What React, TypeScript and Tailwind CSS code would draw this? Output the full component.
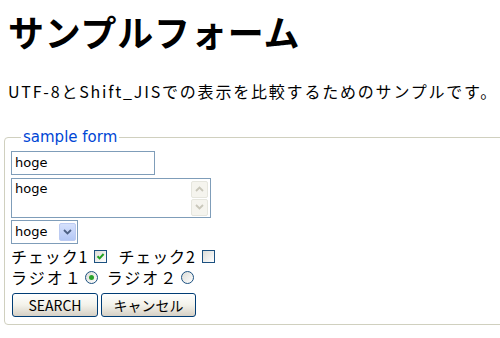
const jp = "font-['MS_PGothic','Noto_Sans_CJK_JP',sans-serif]";

function Chevron({ dir, color }: { dir: 'up' | 'down'; color: string }) {
  return (
    <svg width="9" height="6" viewBox="0 0 9 6">
      <path
        d={dir === 'up' ? 'M1 5 L4.5 1.5 L8 5' : 'M1 1 L4.5 4.5 L8 1'}
        fill="none"
        stroke={color}
        strokeWidth="1.8"
      />
    </svg>
  );
}

function TextBox({ value }: { value: string }) {
  return (
    <div className="flex h-[24px] w-[144px] items-center border border-[#7f9db9] bg-white px-[3px] font-['DejaVu_Sans',sans-serif] text-[13px] text-black">
      {value}
    </div>
  );
}

function TextArea({ value }: { value: string }) {
  return (
    <div className="flex h-[40px] w-[200px] border border-[#7f9db9] bg-white">
      <div className="flex-1 px-[3px] pt-[2px] font-['DejaVu_Sans',sans-serif] text-[13px] leading-[16px] text-black">
        {value}
      </div>
      <div className="mr-[2px] flex w-[17px] flex-col justify-center gap-[1px] py-[1px]">
        <div className="flex h-[17px] items-center justify-center rounded-[2px] border border-[#e6e6de] bg-[#f5f4ee]">
          <Chevron dir="up" color="#c9c7ba" />
        </div>
        <div className="flex h-[17px] items-center justify-center rounded-[2px] border border-[#e6e6de] bg-[#f5f4ee]">
          <Chevron dir="down" color="#c9c7ba" />
        </div>
      </div>
    </div>
  );
}

function SelectBox({ value }: { value: string }) {
  return (
    <div className="flex h-[24px] w-[67px] items-center border border-[#7f9db9] bg-white pl-[3px] pr-[1px]">
      <span className="flex-1 font-['DejaVu_Sans',sans-serif] text-[13px] text-black">{value}</span>
      <div className="flex h-[18px] w-[17px] items-center justify-center rounded-[2px] border border-[#bccbf2] bg-gradient-to-b from-[#d6e1fc] to-[#b4c8f6]">
        <Chevron dir="down" color="#4d6185" />
      </div>
    </div>
  );
}

function CheckBox({ checked }: { checked: boolean }) {
  return (
    <span className="inline-flex h-[13px] w-[13px] items-center justify-center border border-[#1c5180] bg-gradient-to-br from-[#dcdcd7] to-white">
      {checked && (
        <svg width="9" height="9" viewBox="0 0 9 9">
          <path d="M1.5 4.2 L3.6 6.4 L7.6 2" fill="none" stroke="#21a121" strokeWidth="2" />
        </svg>
      )}
    </span>
  );
}

function Radio({ checked }: { checked: boolean }) {
  return (
    <span className="inline-flex h-[13px] w-[13px] items-center justify-center rounded-full border border-[#1c5180] bg-gradient-to-br from-[#dcdcd7] to-white">
      {checked && <span className="h-[5px] w-[5px] rounded-full bg-[#2ba32b]" />}
    </span>
  );
}

function XpButton({ label, width }: { label: string; width: string }) {
  return (
    <button
      className={`flex h-[24px] ${width} items-center justify-center rounded-[3px] border border-[#003c74] bg-gradient-to-b from-white via-[#f3f2ea] to-[#d6d0c5] text-[14px] text-black ${jp}`}
      type="button"
    >
      {label}
    </button>
  );
}

export default function App() {
  return (
    <div className={`h-[338px] w-[500px] overflow-hidden bg-white text-black ${jp}`}>
      <h1 className="ml-[8px] mt-[11px] text-[36px] font-bold leading-[40px] tracking-[0.8px]">
        サンプルフォーム
      </h1>
      <p className="ml-[8px] mt-[30px] whitespace-nowrap text-[16px] leading-[20px] tracking-[1.8px]">
        UTF-8とShift_JISでの表示を比較するためのサンプルです。
      </p>
      <fieldset className="ml-[4px] mt-[27px] w-[510px] rounded-[4px] border border-[#d0d0bf] pb-[7px] pl-[6px] pt-[5px]">
        <legend className="ml-[10px] px-[2px] font-['DejaVu_Sans',sans-serif] text-[15px] leading-[18px] text-[#0046d5]">
          sample form
        </legend>
        <div className="flex flex-col items-start">
          <TextBox value="hoge" />
          <div className="mt-[3px]">
            <TextArea value="hoge" />
          </div>
          <div className="mt-[2px]">
            <SelectBox value="hoge" />
          </div>
          <div className="mt-[2px] flex h-[20px] items-center text-[16px] leading-[20px]">
            <span className="tracking-[0.9px]">チェック1</span>
            <span className="ml-[6px] mr-[11px] flex">
              <CheckBox checked />
            </span>
            <span className="tracking-[0.9px]">チェック2</span>
            <span className="ml-[6px] flex">
              <CheckBox checked={false} />
            </span>
          </div>
          <div className="mt-[1px] flex h-[20px] items-center text-[16px] leading-[20px]">
            <span className="tracking-[2px]">ラジオ１</span>
            <span className="ml-[2px] mr-[9px] flex">
              <Radio checked />
            </span>
            <span className="tracking-[2px]">ラジオ２</span>
            <span className="ml-[3px] flex">
              <Radio checked={false} />
            </span>
          </div>
          <div className="mt-[6px] flex gap-[3px] pl-[1px]">
            <XpButton label="SEARCH" width="w-[86px]" />
            <XpButton label="キャンセル" width="w-[95px]" />
          </div>
        </div>
      </fieldset>
    </div>
  );
}
